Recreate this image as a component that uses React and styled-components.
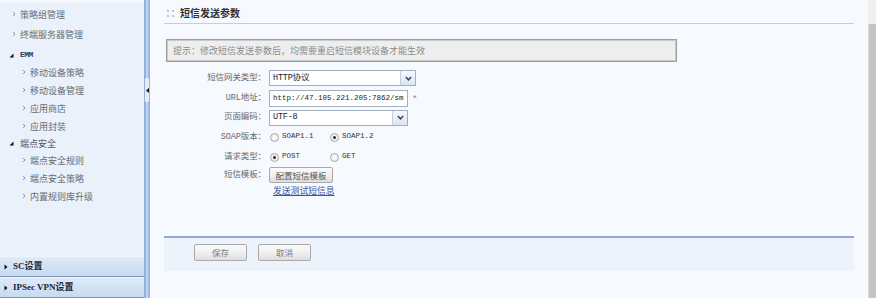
import React from 'react';
import styled, { createGlobalStyle } from 'styled-components';

const Global = createGlobalStyle`
  html, body { margin: 0; padding: 0; }
  body {
    width: 876px; height: 298px; overflow: hidden;
    background: #f6f9fd;
    font-family: "Noto Sans CJK SC", sans-serif;
  }
  * { box-sizing: border-box; }
`;

const CJK = `"Noto Sans CJK SC", sans-serif`;
const MIX = `"Liberation Mono", "Noto Sans CJK SC", monospace`;

const Frame = styled.div`
  display: flex;
  width: 876px;
  height: 298px;
  overflow: hidden;
`;

/* ---------- sidebar ---------- */
const Sidebar = styled.aside`
  width: 144px;
  flex: none;
  display: flex;
  flex-direction: column;
  background: #eaf1fa;
`;

const NavList = styled.ul`
  list-style: none;
  margin: 0;
  padding: 4px 0 0;
  flex: 1;
  box-shadow: inset 0 3px 0 #f3f7fd;
`;

const NavItem = styled.li`
  display: flex;
  align-items: center;
  height: ${p => p.$h}px;
  padding-left: ${p => p.$indent}px;
  font-family: ${CJK};
  font-size: 9px;
  line-height: 1;
  color: #676c74;
  white-space: nowrap;
  gap: 4px;
`;

const GroupHead = styled.li`
  display: flex;
  align-items: center;
  height: 16px;
  margin-top: ${p => p.$mt || 0}px;
  padding-left: 9px;
  gap: 6px;
  font-family: ${p => (p.$latin ? `"Liberation Mono", monospace` : CJK)};
  font-weight: ${p => (p.$latin ? 700 : 400)};
  font-size: ${p => (p.$latin ? '8px' : '9px')};
  letter-spacing: ${p => (p.$latin ? '-0.6px' : '0')};
  line-height: 1;
  color: ${p => (p.$latin ? '#2d3f66' : '#55595f')};
`;

const BottomBar = styled.div`
  height: 21px;
  flex: none;
  display: flex;
  align-items: center;
  padding-left: 4px;
  gap: 5px;
  border-top: 1px solid #eef5fd;
  border-bottom: 1px solid #8195b3;
  background: linear-gradient(#dfebf8, #c6daf1);
  font-family: "Liberation Serif", "Noto Sans CJK SC", serif;
  font-weight: 700;
  font-size: 9px;
  line-height: 1;
  color: #1e2633;
`;

const Splitter = styled.div`
  width: 6px;
  flex: none;
  display: flex;
  justify-content: center;
  background: linear-gradient(to right, #92b0de 0 2px, #c2d4ef 2px 4px, #9ab7e3 4px);
`;

const Handle = styled.div`
  margin-top: 78px;
  width: 4px;
  height: 24px;
  border-radius: 1px;
  background: #e8ecf1;
  display: flex;
  align-items: center;
  justify-content: center;
`;

/* ---------- main ---------- */
const Main = styled.main`
  flex: 1;
  display: flex;
  flex-direction: column;
  padding: 0 14px;
  background: #f6f9fd;
`;

const Header = styled.div`
  height: 24px;
  padding: 3px 0 0 3px;
  display: flex;
  align-items: center;
  border-bottom: 1px solid #c9cdd3;
`;

const Dots = styled.div`
  display: grid;
  grid-template-columns: 2px 2px;
  grid-template-rows: 2px 2px;
  gap: 3px 3px;
  span { background: #b6c7dc; }
`;

const Title = styled.h2`
  margin: 0 0 0 6px;
  font-family: ${CJK};
  font-size: 10px;
  font-weight: 700;
  line-height: 1;
  color: #2b2f36;
`;

const Hint = styled.div`
  margin: 15px 0 0 2px;
  width: 511px;
  height: 23px;
  display: flex;
  align-items: center;
  padding-left: 6px;
  border: 1px solid #9e9e9e;
  box-shadow: inset 0 0 0 1px #c9c9c9;
  background: #eeeeee;
  font-family: ${CJK};
  font-size: 9px;
  line-height: 1;
  color: #8c8c8c;
  white-space: nowrap;
`;

const Form = styled.div`
  margin-top: 6px;
  display: flex;
  flex-direction: column;
`;

const Row = styled.div`
  display: flex;
  align-items: center;
  height: ${p => p.$h}px;
`;

const Label = styled.div`
  width: 102px;
  flex: none;
  text-align: right;
  font-family: ${MIX};
  font-size: 8.5px;
  letter-spacing: -0.1px;
  line-height: 1;
  color: #666a70;
`;

const Control = styled.div`
  margin-left: 3px;
  display: flex;
  align-items: center;
`;

const Select = styled.div`
  width: ${p => p.$w}px;
  height: 16px;
  display: flex;
  border: 1px solid #a4afbe;
  background: #fff;
`;

const SelectValue = styled.div`
  flex: 1;
  display: flex;
  align-items: center;
  padding-left: 3px;
  font-family: ${MIX};
  font-size: 8.5px;
  letter-spacing: -0.2px;
  line-height: 1;
  color: #222;
`;

const SelectArrow = styled.div`
  width: 15px;
  flex: none;
  display: flex;
  align-items: center;
  justify-content: center;
  border-left: 1px solid #c3cddb;
  background: linear-gradient(#f6f8fb, #dde5f0);
`;

const TextInput = styled.input`
  width: ${p => p.$w}px;
  height: 17px;
  margin: 0;
  padding: 0 3px;
  border: 1px solid #a4afbe;
  background: #fff;
  font-family: "Liberation Mono", monospace;
  font-size: 7.5px;
  color: #222;
  outline: none;
`;

const Required = styled.span`
  margin-left: 5px;
  font-family: "Liberation Sans", sans-serif;
  font-size: 9px;
  color: #8a8a8a;
`;

const RadioOption = styled.label`
  width: 60px;
  display: flex;
  align-items: center;
  gap: 3px;
  padding-left: 1px;
  font-family: "Liberation Mono", monospace;
  font-size: 7.5px;
  line-height: 1;
  color: #333;
`;

const RadioDot = styled.span`
  width: 9px;
  height: 9px;
  border-radius: 50%;
  border: 1px solid #a9a9a9;
  background: radial-gradient(circle, #fff 0, #e3e3e3 100%);
  display: flex;
  align-items: center;
  justify-content: center;
  &::after {
    content: "";
    width: 3px;
    height: 3px;
    border-radius: 50%;
    background: ${p => (p.$on ? '#2a2a2a' : 'transparent')};
  }
`;

const Button = styled.button`
  width: ${p => p.$w}px;
  height: ${p => p.$hgt || 17}px;
  margin: 0;
  padding: 0;
  border: 1px solid #aaaaaa;
  border-radius: 2px;
  background: linear-gradient(#fbfbfb 0%, #f0f0f0 50%, #dedede 100%);
  font-family: ${CJK};
  font-size: 8.5px;
  line-height: 1;
  color: ${p => p.$fg || '#555'};
  cursor: pointer;
`;

const LinkText = styled.a`
  margin-left: 7px;
  font-family: ${CJK};
  font-size: 8.8px;
  line-height: 1;
  color: #3158a8;
  text-decoration: underline;
  cursor: pointer;
`;

const Footer = styled.div`
  margin-top: 36px;
  height: 35px;
  display: flex;
  align-items: flex-start;
  gap: 11px;
  padding: 6px 0 0 30px;
  border-top: 2px solid #8ea9d6;
  background: #edf3fb;
`;

const Scrollbar = styled.div`
  width: 8px;
  flex: none;
  display: flex;
  flex-direction: column;
  background: #efefef;
`;

const ScrollTrack = styled.div`
  margin-top: 24px;
  flex: 1;
  background: #c3c3c3;
  border-left: 1px solid #d8d8d8;
`;

/* ---------- icons ---------- */
const Chevron = () => (
  <svg width="4" height="6" viewBox="0 0 4 6" style={{ flex: 'none' }}>
    <polyline points="1,0.8 3,3 1,5.2" fill="none" stroke="#8097b8" strokeWidth="1" />
  </svg>
);

const OpenTri = () => (
  <svg width="5" height="5" viewBox="0 0 5 5" style={{ flex: 'none' }}>
    <polygon points="4.5,0.5 4.5,4.5 0.5,4.5" fill="#111" />
  </svg>
);

const RightTri = () => (
  <svg width="4" height="6" viewBox="0 0 4 6" style={{ flex: 'none' }}>
    <polygon points="0.5,0.5 3.5,3 0.5,5.5" fill="#111" />
  </svg>
);

const LeftTri = () => (
  <svg width="3" height="5" viewBox="0 0 3 5">
    <polygon points="3,0 0,2.5 3,5" fill="#111" />
  </svg>
);

const DownChevron = () => (
  <svg width="7" height="5" viewBox="0 0 7 5">
    <polyline points="0.8,1 3.5,3.8 6.2,1" fill="none" stroke="#2a4676" strokeWidth="1.5" />
  </svg>
);

const topItems = ['策略组管理', '终端服务器管理'];
const groups = [
  { title: 'EMM', latin: true, mt: 3, items: ['移动设备策略', '移动设备管理', '应用商店', '应用封装'] },
  { title: '端点安全', latin: false, mt: 0, items: ['端点安全规则', '端点安全策略', '内置规则库升级'] },
];

export default function App() {
  return (
    <>
      <Global />
      <Frame>
        <Sidebar>
          <NavList>
            {topItems.map(t => (
              <NavItem key={t} $h={20} $indent={12}>
                <Chevron />
                {t}
              </NavItem>
            ))}
            {groups.map(g => (
              <React.Fragment key={g.title}>
                <GroupHead $latin={g.latin} $mt={g.mt}>
                  <OpenTri />
                  {g.title}
                </GroupHead>
                {g.items.map(t => (
                  <NavItem key={t} $h={18} $indent={22}>
                    <Chevron />
                    {t}
                  </NavItem>
                ))}
              </React.Fragment>
            ))}
          </NavList>
          <BottomBar>
            <RightTri />
            SC设置
          </BottomBar>
          <BottomBar>
            <RightTri />
            IPSec VPN设置
          </BottomBar>
        </Sidebar>

        <Splitter>
          <Handle>
            <LeftTri />
          </Handle>
        </Splitter>

        <Main>
          <Header>
            <Dots>
              <span /><span /><span /><span />
            </Dots>
            <Title>短信发送参数</Title>
          </Header>

          <Hint>提示：修改短信发送参数后，均需要重启短信模块设备才能生效</Hint>

          <Form>
            <Row $h={20}>
              <Label>短信网关类型：</Label>
              <Control>
                <Select $w={147}>
                  <SelectValue>HTTP协议</SelectValue>
                  <SelectArrow><DownChevron /></SelectArrow>
                </Select>
              </Control>
            </Row>
            <Row $h={20}>
              <Label>URL地址：</Label>
              <Control>
                <TextInput $w={139} readOnly value="http://47.105.221.205:7862/sms/send" />
                <Required>*</Required>
              </Control>
            </Row>
            <Row $h={19}>
              <Label>页面编码：</Label>
              <Control>
                <Select $w={139}>
                  <SelectValue>UTF-8</SelectValue>
                  <SelectArrow><DownChevron /></SelectArrow>
                </Select>
              </Control>
            </Row>
            <Row $h={20}>
              <Label>SOAP版本：</Label>
              <Control>
                <RadioOption><RadioDot />SOAP1.1</RadioOption>
                <RadioOption><RadioDot $on />SOAP1.2</RadioOption>
              </Control>
            </Row>
            <Row $h={20}>
              <Label>请求类型：</Label>
              <Control>
                <RadioOption><RadioDot $on />POST</RadioOption>
                <RadioOption><RadioDot />GET</RadioOption>
              </Control>
            </Row>
            <Row $h={16}>
              <Label>短信模板：</Label>
              <Control>
                <Button $w={64} $hgt={16}>配置短信模板</Button>
              </Control>
            </Row>
            <Row $h={17}>
              <Label />
              <LinkText>发送测试短信息</LinkText>
            </Row>
          </Form>

          <Footer>
            <Button $w={53} $fg="#7a7a7a">保存</Button>
            <Button $w={53} $fg="#7a7a7a">取消</Button>
          </Footer>
        </Main>

        <Scrollbar>
          <ScrollTrack />
        </Scrollbar>
      </Frame>
    </>
  );
}
